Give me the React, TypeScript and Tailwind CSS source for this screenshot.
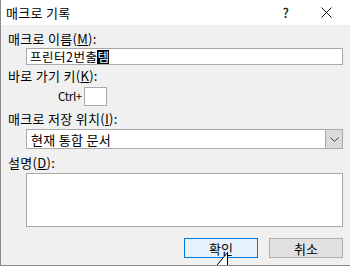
import React from 'react';

const font = { fontFamily: '"Noto Sans CJK KR", "Noto Sans", sans-serif' };

function Label({ text, hot, rest }: { text: string; hot: string; rest: string }) {
  return (
    <div className="h-[16px] leading-[16px] text-[13px] text-black pl-[7px] tracking-[0.3px]">
      {text}(<u>{hot}</u>){rest}
    </div>
  );
}

export default function App() {
  return (
    <div className="w-[350px] h-[266px] bg-[#f0f0f0] border-l border-b border-[#8a8a8a] relative overflow-hidden" style={font}>
      {/* title bar */}
      <div className="h-[25px] bg-white flex items-center">
        <span className="pl-[5px] text-[13px] text-black leading-none tracking-[0.3px]">매크로 기록</span>
        <span className="ml-auto mr-[32px] text-[13px] font-medium text-[#222] leading-none">?</span>
        <svg width="11" height="11" viewBox="0 0 11 11" className="mr-[18px]">
          <path d="M0.5 0.5 L10.5 10.5 M10.5 0.5 L0.5 10.5" stroke="#111" strokeWidth="1" />
        </svg>
      </div>

      <div className="flex flex-col pt-[6px]">
        <Label text="매크로 이름" hot="M" rest=":" />
        <div className="mt-[1px] ml-[25px] mr-[7px] h-[17px] bg-white border border-[#a9a9a9] flex items-end pl-[3px] text-[12.5px] leading-[14px] tracking-[0.5px] overflow-hidden">
          <span>프린터2번출</span>
          <span className="bg-black text-white">템</span>
        </div>

        <div className="mt-[3px]">
          <Label text="바로 가기 키" hot="K" rest=":" />
        </div>
        <div className="mt-[3px] flex items-center h-[19px]">
          <span className="ml-[57px] w-[26px] text-[11.5px] leading-none tracking-[-0.3px]">Ctrl+</span>
          <div className="w-[23px] h-[19px] bg-white border border-[#a9a9a9]" />
        </div>

        <div className="mt-[5px]">
          <Label text="매크로 저장 위치" hot="I" rest=":" />
        </div>
        <div className="mt-[2px] ml-[25px] mr-[7px] h-[20px] bg-white border border-[#a9a9a9] flex items-stretch">
          <div className="flex-1 flex items-center pl-[4px] text-[13px] leading-none tracking-[0.3px]">현재 통합 문서</div>
          <div className="w-[17px] bg-[#dadada] border-l border-[#a9a9a9] flex items-center justify-center">
            <svg width="9" height="5" viewBox="0 0 9 5">
              <path d="M0.5 0.5 L4.5 4.5 L8.5 0.5" fill="none" stroke="#444" strokeWidth="1" />
            </svg>
          </div>
        </div>

        <div className="mt-[6px]">
          <Label text="설명" hot="D" rest=":" />
        </div>
        <div className="mt-[2px] ml-[25px] mr-[7px] h-[54px] bg-white border border-[#a9a9a9]" />

        <div className="mt-[11px] flex justify-end gap-[11px] mr-[7px]">
          <button className="w-[74px] h-[20px] bg-[#e5f1fb] border border-[#0078d7] text-[13px] leading-none text-black">
            확인
          </button>
          <button className="w-[74px] h-[20px] bg-[#e1e1e1] border border-[#adadad] text-[13px] leading-none text-black">
            취소
          </button>
        </div>
      </div>

      {/* mouse pointer */}
      <svg width="14" height="15" viewBox="0 0 14 15" className="absolute left-[214px] top-[252px]">
        <path d="M12.5 0.5 L12.5 15 L0.5 15 Z" fill="white" stroke="black" strokeWidth="1" />
      </svg>
    </div>
  );
}
